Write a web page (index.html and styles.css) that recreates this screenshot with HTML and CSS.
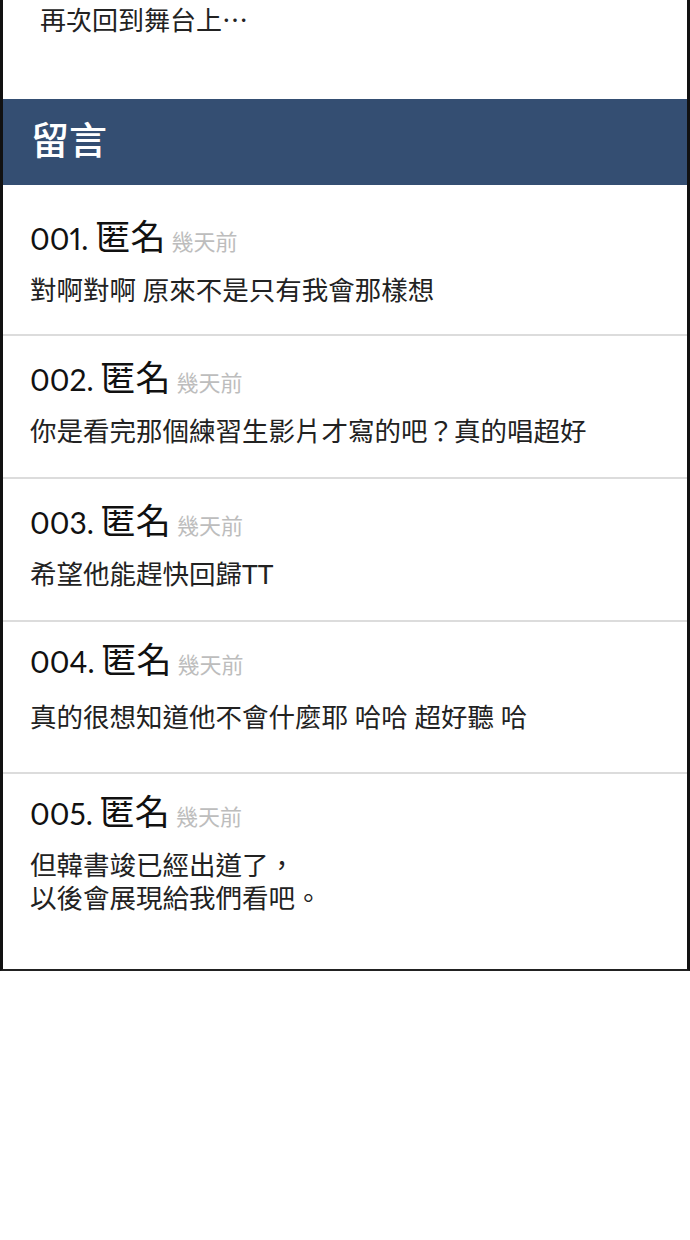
FILE: index.html
```html
<!DOCTYPE html>
<html lang="zh-Hant">
<head>
  <meta charset="UTF-8" />
  <meta name="viewport" content="width=device-width, initial-scale=1.0"/>
  <title>留言</title>
  <link rel="stylesheet" href="styles.css">
</head>
<body>
  <div class="board">
    <div class="intro">
      <p>再次回到舞台上…</p>
    </div>

    <div class="board-head">
      <h2>留言</h2>
    </div>

    <ul class="comments">
      <li class="comment">
        <div class="comment-title"><span class="num">001.</span><span class="name">匿名</span><span class="time">幾天前</span></div>
        <p class="comment-body">對啊對啊 原來不是只有我會那樣想</p>
      </li>
      <li class="comment">
        <div class="comment-title"><span class="num">002.</span><span class="name">匿名</span><span class="time">幾天前</span></div>
        <p class="comment-body">你是看完那個練習生影片才寫的吧？真的唱超好</p>
      </li>
      <li class="comment">
        <div class="comment-title"><span class="num">003.</span><span class="name">匿名</span><span class="time">幾天前</span></div>
        <p class="comment-body">希望他能趕快回歸TT</p>
      </li>
      <li class="comment">
        <div class="comment-title"><span class="num">004.</span><span class="name">匿名</span><span class="time">幾天前</span></div>
        <p class="comment-body">真的很想知道他不會什麼耶 哈哈 超好聽 哈</p>
      </li>
      <li class="comment">
        <div class="comment-title"><span class="num">005.</span><span class="name">匿名</span><span class="time">幾天前</span></div>
        <p class="comment-body">但韓書竣已經出道了，<br>以後會展現給我們看吧。</p>
      </li>
    </ul>
  </div>
</body>
</html>
```

FILE: styles.css
```css
:root {
  --navy: #344e72;
  --line: #dcdcdc;
  --cjk: "Noto Sans CJK TC", sans-serif;
}

* {
  margin: 0;
  padding: 0;
  box-sizing: border-box;
}

body {
  background: #ffffff;
  color: #1a1a1a;
  font-family: Lato, "Noto Sans CJK TC", sans-serif;
}

.board {
  width: 690px;
  border-left: 3px solid #111;
  border-right: 3px solid #111;
  border-bottom: 2px solid #222;
}

.intro {
  height: 99px;
  padding-left: 37px;
}

.intro p {
  font-family: var(--cjk);
  font-size: 26px;
  line-height: 38px;
  color: #222;
}

.board-head {
  height: 86px;
  background: var(--navy);
  display: flex;
  align-items: center;
  padding: 0 0 8px 28px;
}

.board-head h2 {
  font-family: var(--cjk);
  font-size: 38px;
  font-weight: 500;
  color: #ffffff;
  line-height: 1;
}

.comments {
  list-style: none;
}

.comment {
  padding: 20px 27px 29px;
  border-bottom: 2px solid var(--line);
}

.comment:first-child {
  padding-top: 30px;
  padding-bottom: 27px;
}

.comment:nth-child(4) {
  padding-top: 16px;
  padding-bottom: 38px;
}

.comment:nth-child(4) .comment-body {
  margin-top: 23px;
}

.comment:last-child {
  border-bottom: none;
  padding-top: 16px;
  padding-bottom: 54px;
}

.comment-title {
  display: flex;
  align-items: baseline;
  height: 40px;
  line-height: 40px;
  color: #111;
}

.num {
  font-size: 30px;
  font-variant-numeric: proportional-nums;
  margin-right: 7px;
}

.name {
  font-family: var(--cjk);
  font-size: 35px;
  margin-right: 6px;
}

.time {
  font-family: var(--cjk);
  font-size: 22px;
  color: #bdbdbd;
}

.comment-body {
  margin-top: 19px;
  font-size: 26.5px;
  line-height: 33px;
  color: #222;
}
```
